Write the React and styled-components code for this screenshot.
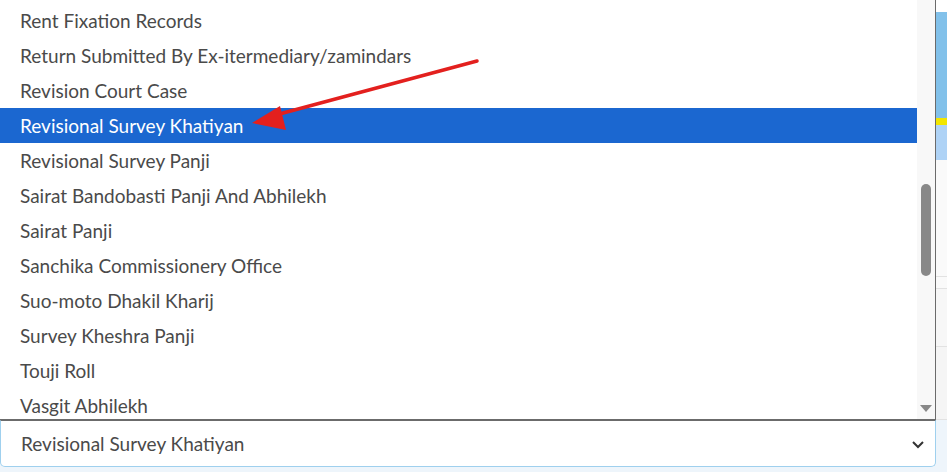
import React from 'react'
import styled, { createGlobalStyle } from 'styled-components'

const items = [
    'Rent Fixation Records',
    'Return Submitted By Ex-itermediary/zamindars',
    'Revision Court Case',
    'Revisional Survey Khatiyan',
    'Revisional Survey Panji',
    'Sairat Bandobasti Panji And Abhilekh',
    'Sairat Panji',
    'Sanchika Commissionery Office',
    'Suo-moto Dhakil Kharij',
    'Survey Kheshra Panji',
    'Touji Roll',
    'Vasgit Abhilekh',
]

const selected = 'Revisional Survey Khatiyan'

const App = () => {
    return (
        <Page>
            <Global />
            <Top>
                <ListBox>
                    <Options>
                        {items.map((item) => (
                            <Option key={item} active={item === selected}>{item}</Option>
                        ))}
                    </Options>
                    <Track>
                        <Thumb />
                        <DownArrow />
                    </Track>
                </ListBox>
                <MapStrip>
                    <Band color="#fff" h={12} />
                    <Band color="#82c1ea" h={106} />
                    <Band color="#f2e600" h={7} />
                    <Band color="#afd3f6" h={35} />
                    <Band color="#fafafa" h={117} line />
                    <Band color="#fafafa" h={12} line />
                    <Band color="#f7f7f7" h={58} line />
                    <Band color="#f5f5f5" h={73} line />
                </MapStrip>
            </Top>
            <SelectBox>
                <span>{selected}</span>
                <svg width="14" height="10" viewBox="0 0 14 10">
                    <path d="M2 3 L7 8 L12 3" fill="none" stroke="#333" strokeWidth="2" />
                </svg>
            </SelectBox>
            <Pointer width="947" height="472" viewBox="0 0 947 472">
                <line x1="477" y1="61" x2="272" y2="116" stroke="#e3201e" strokeWidth="3.5" strokeLinecap="round" />
                <polygon points="252,123 280,106 286,130" fill="#e3201e" />
            </Pointer>
        </Page>
    )
}

const Global = createGlobalStyle`
    body {
        margin: 0;
        background: #eef5fb;
        font-family: 'Lato', 'Noto Sans', sans-serif;
    }
`
const Page = styled.div`
    position: relative;
    width: 947px;
    height: 472px;
    overflow: hidden;
`
const Top = styled.div`
    display: flex;
    height: 420px;
    background: #fff;
`
const ListBox = styled.div`
    display: flex;
    width: 936px;
    height: 420px;
    box-sizing: border-box;
    border-right: 1px solid #6b6b6b;
    border-bottom: 1px solid #6b6b6b;
    overflow: hidden;
    background: #fff;
`
const Options = styled.div`
    flex: 1;
    padding-top: 3px;
`
const Option = styled.div`
    height: 35px;
    line-height: 35px;
    padding-left: 20px;
    font-size: 19px;
    color: ${(p) => (p.active ? '#fff' : '#4a4a4a')};
    background: ${(p) => (p.active ? '#1b67d0' : 'transparent')};
    white-space: nowrap;
`
const Track = styled.div`
    position: relative;
    width: 18px;
    background: #f8f8f8;
`
const Thumb = styled.div`
    position: absolute;
    top: 184px;
    left: 4px;
    width: 10px;
    height: 92px;
    border-radius: 5px;
    background: #888;
`
const DownArrow = styled.div`
    position: absolute;
    top: 405px;
    left: 3px;
    width: 0;
    height: 0;
    border-left: 6px solid transparent;
    border-right: 6px solid transparent;
    border-top: 7px solid #888;
`
const MapStrip = styled.div`
    flex: 1;
    display: flex;
    flex-direction: column;
`
const Band = styled.div`
    height: ${(p) => p.h}px;
    flex-shrink: 0;
    background: ${(p) => p.color};
    border-bottom: ${(p) => (p.line ? '1px solid #e2e2e2' : 'none')};
    box-sizing: border-box;
`
const SelectBox = styled.div`
    display: flex;
    align-items: center;
    justify-content: space-between;
    width: 936px;
    height: 47px;
    box-sizing: border-box;
    padding: 0 10px 0 20px;
    background: #fff;
    border: 1px solid #9fd0ee;
    border-top-color: #6b6b6b;
    border-radius: 0 0 5px 5px;
    font-size: 19px;
    color: #4a4a4a;
`
const Pointer = styled.svg`
    position: absolute;
    top: 0;
    left: 0;
    pointer-events: none;
`

export default App
